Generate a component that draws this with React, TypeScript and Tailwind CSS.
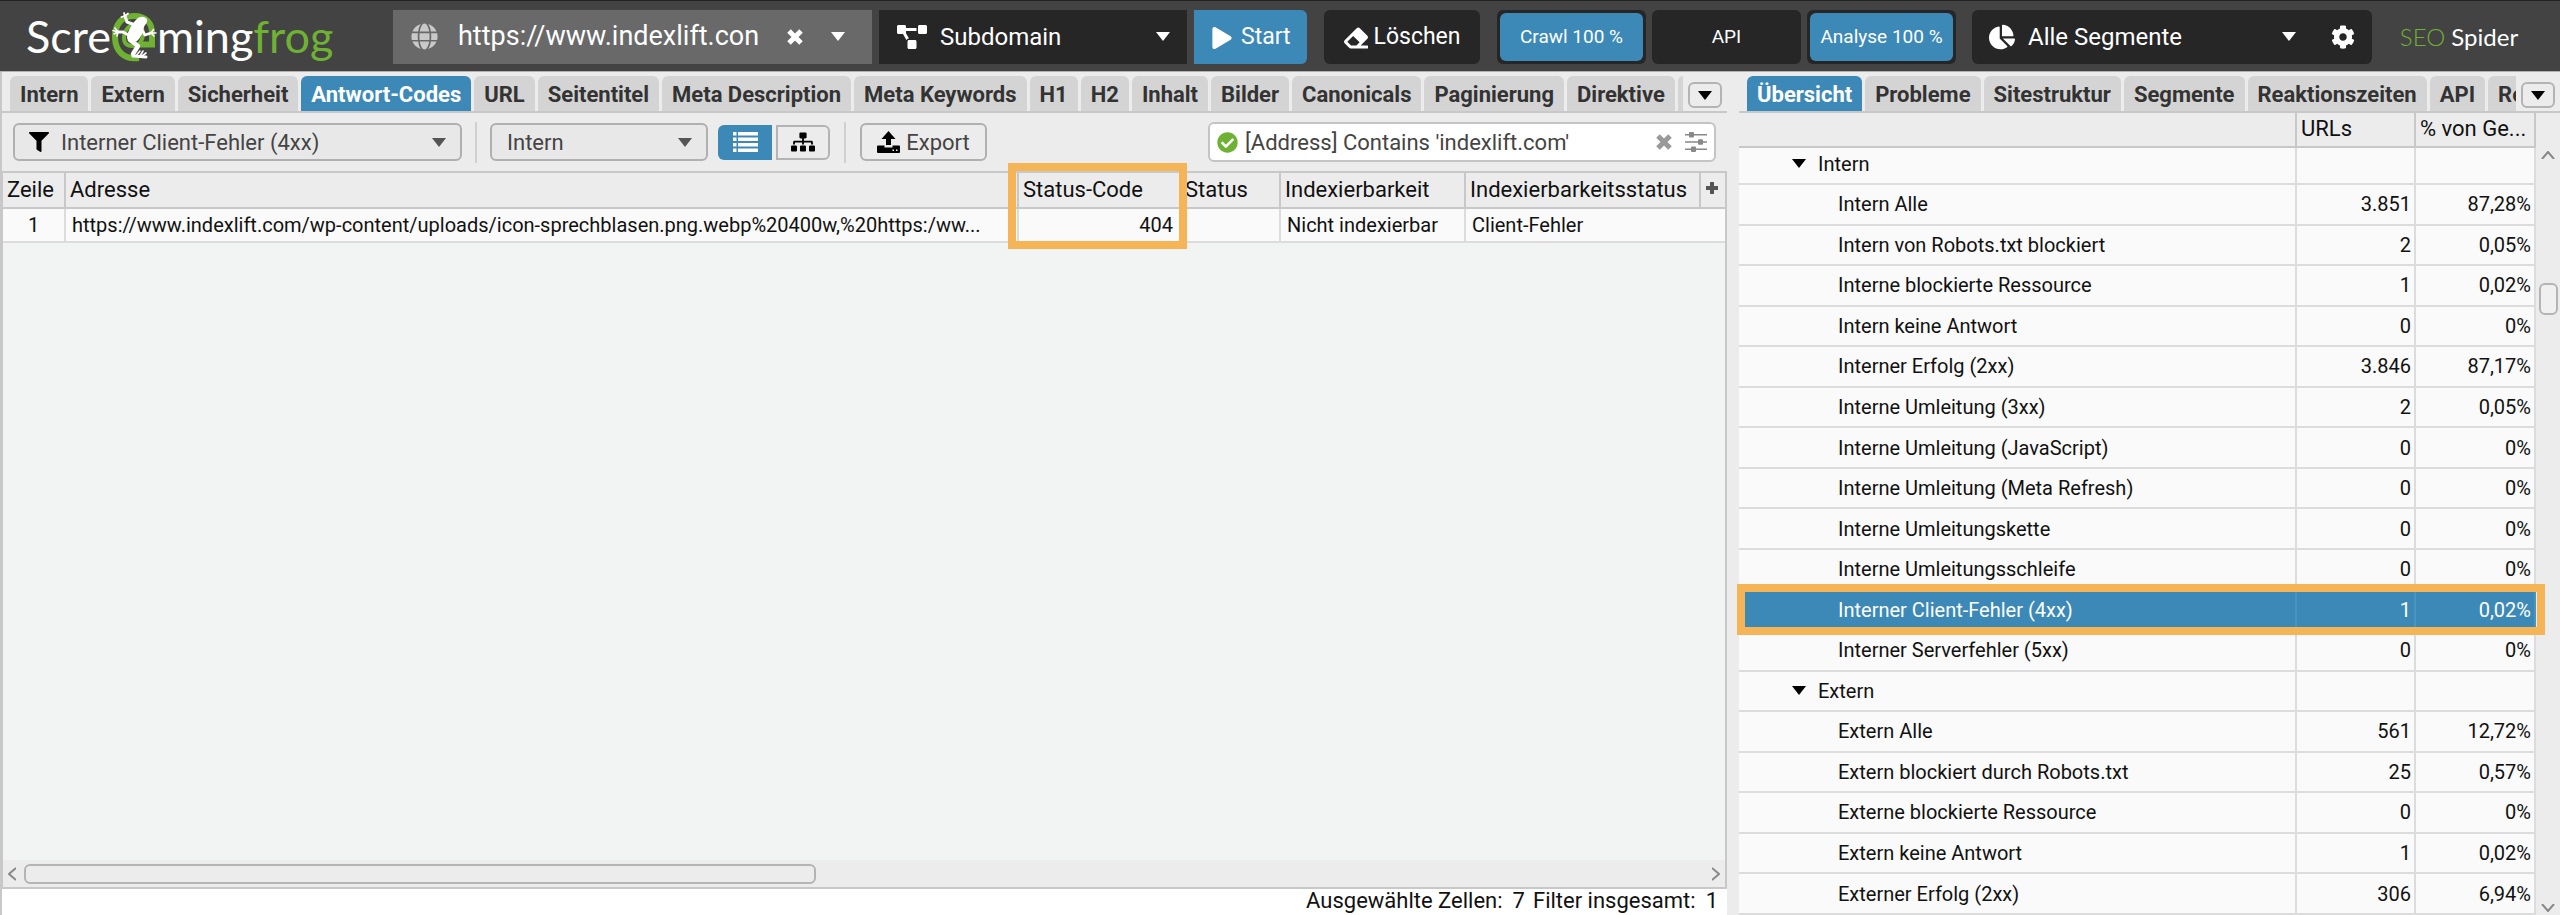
import { useState } from 'react';
import type { ReactNode } from 'react';
import { clsx } from 'clsx';
import {
  FaChartPie,
  FaCheckCircle,
  FaCog,
  FaEraser,
  FaFilter,
  FaGlobe,
  FaPlay,
  FaProjectDiagram,
  FaSitemap,
} from 'react-icons/fa';

const MAIN_TABS = [
  'Intern', 'Extern', 'Sicherheit', 'Antwort-Codes', 'URL', 'Seitentitel', 'Meta Description',
  'Meta Keywords', 'H1', 'H2', 'Inhalt', 'Bilder', 'Canonicals', 'Paginierung', 'Direktive',
];

const SIDE_TABS = ['Übersicht', 'Probleme', 'Sitestruktur', 'Segmente', 'Reaktionszeiten', 'API', 'Re'];

interface OverviewRow {
  label: string;
  urls?: string;
  share?: string;
  group?: boolean;
}

const OVERVIEW: OverviewRow[] = [
  { label: 'Intern', group: true },
  { label: 'Intern Alle', urls: '3.851', share: '87,28%' },
  { label: 'Intern von Robots.txt blockiert', urls: '2', share: '0,05%' },
  { label: 'Interne blockierte Ressource', urls: '1', share: '0,02%' },
  { label: 'Intern keine Antwort', urls: '0', share: '0%' },
  { label: 'Interner Erfolg (2xx)', urls: '3.846', share: '87,17%' },
  { label: 'Interne Umleitung (3xx)', urls: '2', share: '0,05%' },
  { label: 'Interne Umleitung (JavaScript)', urls: '0', share: '0%' },
  { label: 'Interne Umleitung (Meta Refresh)', urls: '0', share: '0%' },
  { label: 'Interne Umleitungskette', urls: '0', share: '0%' },
  { label: 'Interne Umleitungsschleife', urls: '0', share: '0%' },
  { label: 'Interner Client-Fehler (4xx)', urls: '1', share: '0,02%' },
  { label: 'Interner Serverfehler (5xx)', urls: '0', share: '0%' },
  { label: 'Extern', group: true },
  { label: 'Extern Alle', urls: '561', share: '12,72%' },
  { label: 'Extern blockiert durch Robots.txt', urls: '25', share: '0,57%' },
  { label: 'Externe blockierte Ressource', urls: '0', share: '0%' },
  { label: 'Extern keine Antwort', urls: '1', share: '0,02%' },
  { label: 'Externer Erfolg (2xx)', urls: '306', share: '6,94%' },
];

function Caret({ className }: { className?: string }) {
  return (
    <svg viewBox="0 0 14 9" className={clsx('h-[9px] w-[14px] shrink-0', className)} fill="currentColor" aria-hidden>
      <path d="M0 0h14L7 9z" />
    </svg>
  );
}

function Cross({ className }: { className?: string }) {
  return (
    <svg viewBox="0 0 16 16" className={clsx('size-4', className)} stroke="currentColor" strokeWidth="5" aria-hidden>
      <path d="M2 2l12 12M14 2L2 14" />
    </svg>
  );
}

function ListIcon() {
  return (
    <svg viewBox="0 0 25 20" className="h-5 w-[25px]" fill="currentColor" aria-hidden>
      <path d="M0 0h3.500v3.500H0zM5 0h20v3.500H5zM0 5.500h3.500V9H0zM5 5.500h20V9H5zM0 11h3.500v3.500H0zM5 11h20v3.500H5zM0 16.500h3.500V20H0zM5 16.500h20V20H5z" />
    </svg>
  );
}

function UploadIcon() {
  return (
    <svg viewBox="0 0 23 22" className="h-[22px] w-[23px]" fill="currentColor" aria-hidden>
      <path d="M11.500 0l7 8H14v6H9V8H4.500z" />
      <path
        fillRule="evenodd"
        d="M1 14.500h6.500v2h8v-2H22a1 1 0 0 1 1 1V21a1 1 0 0 1-1 1H1a1 1 0 0 1-1-1v-5.500a1 1 0 0 1 1-1zM15.500 18.500v1.500H17v-1.500zM19 18.500v1.500h1.500v-1.500z"
      />
    </svg>
  );
}

function SlidersIcon() {
  return (
    <svg viewBox="0 0 22 20" className="h-5 w-[22px]" fill="currentColor" aria-hidden>
      <path d="M0 2h22v1.500H0zM0 9.200h22v1.500H0zM0 16.500h22V18H0z" />
      <rect x="4" y="0" width="5" height="5.500" rx="1" />
      <rect x="13" y="7.200" width="5" height="5.500" rx="1" />
      <rect x="6" y="14.500" width="5" height="5.500" rx="1" />
    </svg>
  );
}

function FrogMark() {
  return (
    <svg viewBox="9 7 46 50" className="h-[50px] w-[46px]" fill="none" strokeLinecap="round" strokeLinejoin="round" aria-hidden>
      <path d="M37 53C22 55 13 46 13 32 13 19 20 11 32 11c12 0 18 7 18 17v11.500H37" stroke="#6fb133" strokeWidth="6" strokeLinecap="butt" strokeLinejoin="miter" />
      <path d="M22 33c0-8 5-13 11-13 5 0 8 4 8 9s-3 12-10 12-9-4-9-8z" stroke="#6fb133" strokeWidth="4" />
      <path d="M36 13c3-2 8-1.500 9 1.500 1 3-2 5-3 7.500-1 6-3.500 11-7 14-4 3-10 1-10-4 1-7 6-15 11-19z" fill="#fff" />
      <g stroke="#fff">
        <path d="M33 20l-8-3-2-6" strokeWidth="3" />
        <path d="M23 11l-3.500 1M23 11l-1-3M23 11l3-2.500" strokeWidth="1.800" />
        <path d="M28 31l-7-4h-6" strokeWidth="2.800" />
        <path d="M16 27l-5-1.500M16 27l-4 2M16 27l-1 4M16 27l-3-4" strokeWidth="1.600" />
        <path d="M40 25l3 5 6-2" strokeWidth="2.800" />
        <path d="M49 28l2.500-3.500M49 28h5M49 28l3 3" strokeWidth="1.600" />
        <path d="M28 35l8 6-5 8" strokeWidth="4.500" />
        <path d="M31 51l13 1" strokeWidth="3" />
        <path d="M34 51l4-5M38 51l3-5M40 51l4-3" strokeWidth="1.600" />
      </g>
    </svg>
  );
}

interface TabBarProps {
  tabs: string[];
  initial: string;
  label: string;
  tail?: ReactNode;
}

function TabBar({ tabs, initial, label, tail }: TabBarProps) {
  const [active, setActive] = useState(initial);

  return (
    <div className="flex h-[41px] items-end border-b-2 border-[#c8c8c8]">
      <div role="tablist" aria-label={label} className="flex h-[35px] min-w-0 flex-1 gap-[3px] overflow-hidden pl-2">
        {tabs.map(tab => (
          <button
            key={tab}
            role="tab"
            aria-selected={tab === active}
            onClick={() => setActive(tab)}
            className={clsx(
              'shrink-0 rounded-t-md px-[10px] pt-0.5 text-[22px] font-bold whitespace-nowrap',
              tab === active ? 'bg-[#3c89b8] text-white' : 'bg-[#d4d4d4] text-[#333]',
            )}
          >
            {tab}
          </button>
        ))}
        {tail}
      </div>
      <button
        aria-label="Weitere Tabs"
        className="mx-[5px] mb-[3px] flex h-[26px] w-[34px] items-center justify-center rounded-md border-2 border-[#b4b4b4] bg-[#ececec] text-black"
      >
        <Caret />
      </button>
    </div>
  );
}

function Toolbar() {
  return (
    <header className="flex h-[72px] items-center border-t border-b border-t-[#222] border-b-[#b5b1b1] bg-[#434343] pt-px text-2xl text-white">
      <div className="ml-[26px] flex w-[367px] items-center font-[Lato,sans-serif] text-[45px] leading-none">
        Scre
        <FrogMark />
        ming<span className="text-[#6fb133]">frog</span>
      </div>

      <div className="flex h-[54px] w-[479px] items-center bg-[#696969] pr-[27px] pl-[18px]">
        <FaGlobe className="mr-5 size-[27px] shrink-0 text-[#c9c9c9]" />
        <input
          aria-label="URL"
          defaultValue="https://www.indexlift.con"
          className="min-w-0 flex-1 bg-transparent text-[27px] outline-none"
        />
        <button aria-label="URL leeren" className="mr-7">
          <Cross />
        </button>
        <button aria-label="Letzte URLs">
          <Caret />
        </button>
      </div>

      <div className="relative ml-[7px] flex h-[54px] w-[308px] items-center bg-[#262626] pl-[18px]">
        <FaProjectDiagram className="size-[30px]" />
        <select aria-label="Crawl-Modus" className="absolute inset-0 appearance-none bg-transparent pl-[61px] outline-none">
          <option>Subdomain</option>
        </select>
        <Caret className="pointer-events-none absolute right-[17px]" />
      </div>

      <button className="ml-[7px] flex h-[54px] w-[113px] items-center gap-2 rounded-r-md bg-[#3c89b8] pt-0.5 pl-[17px] text-[23px]">
        <FaPlay className="size-[22px]" />
        Start
      </button>
      <button className="ml-[17px] flex h-[54px] w-[156px] items-center justify-center gap-[6px] rounded-md bg-[#262626] pt-0.5 text-[23px]">
        <FaEraser className="size-6" />
        Löschen
      </button>

      <div className="ml-[17px] flex h-[54px] gap-[6px] text-[19px]">
        <div className="w-[149px] rounded-md bg-[#262626] p-[3px]">
          <div className="flex h-full items-center justify-center rounded-md bg-[#3c89b8]">Crawl 100 %</div>
        </div>
        <div className="flex w-[149px] items-center justify-center rounded-md bg-[#262626]">API</div>
        <div className="w-[149px] rounded-md bg-[#262626] p-[3px]">
          <div className="flex h-full items-center justify-center rounded-md bg-[#3c89b8]">Analyse 100 %</div>
        </div>
      </div>

      <div className="relative ml-4 flex h-[54px] w-[400px] items-center rounded-md bg-[#262626] pl-[17px]">
        <FaChartPie className="size-[26px]" />
        <select aria-label="Segmente" className="absolute inset-0 appearance-none bg-transparent pl-[56px] outline-none">
          <option>Alle Segmente</option>
        </select>
        <Caret className="pointer-events-none absolute right-[76px]" />
        <button aria-label="Segmente konfigurieren" className="absolute right-[17px]">
          <FaCog className="size-6" />
        </button>
      </div>

      <div className="flex-1 pr-[14px] text-center font-[Lato,sans-serif]">
        <span className="font-light text-[#6fb133]">SEO</span> Spider
      </div>
    </header>
  );
}

function FilterBar() {
  return (
    <div className="flex h-[58px] items-center px-[11px] text-[22px] text-[#444]">
      <div className="relative flex h-[38px] w-[449px] items-center">
        <select
          aria-label="Filter"
          className="absolute inset-0 appearance-none rounded-md border-2 border-[#b0b0b0] bg-[#e8e8e8] pl-[46px] outline-none"
        >
          <option>Interner Client-Fehler (4xx)</option>
        </select>
        <FaFilter className="pointer-events-none absolute left-4 size-5 text-black" />
        <Caret className="pointer-events-none absolute right-4 text-[#555]" />
      </div>
      <div className="mx-[13px] h-[41px] w-0.5 bg-[#d0d0d0]" />
      <div className="relative flex h-[38px] w-[218px] items-center">
        <select
          aria-label="Bereich"
          className="absolute inset-0 appearance-none rounded-md border-2 border-[#b0b0b0] bg-[#e8e8e8] pl-[15px] outline-none"
        >
          <option>Intern</option>
        </select>
        <Caret className="pointer-events-none absolute right-4 text-[#555]" />
      </div>
      <button
        aria-label="Listenansicht"
        className="ml-[10px] flex h-[35px] w-[54px] items-center justify-center rounded-l-md bg-[#3c89b8] text-white"
      >
        <ListIcon />
      </button>
      <button
        aria-label="Baumansicht"
        className="ml-1 flex h-[35px] w-[54px] items-center justify-center rounded-r-md border-2 border-[#b4b4b4] bg-[#ececec] text-black"
      >
        <FaSitemap className="size-6" />
      </button>
      <div className="mx-[14px] h-[41px] w-0.5 bg-[#d0d0d0]" />
      <button className="flex h-[38px] w-[127px] items-center justify-center gap-[6px] rounded-md border-2 border-[#b0b0b0] bg-[#ececec]">
        <span className="text-black">
          <UploadIcon />
        </span>
        Export
      </button>

      <div className="ml-auto flex h-10 w-[508px] items-center rounded-md border-2 border-[#c4c4c4] bg-white px-[7px]">
        <FaCheckCircle className="mr-[7px] size-[21px] shrink-0 text-[#6fb133]" />
        <input
          aria-label="Suche"
          defaultValue="[Address] Contains 'indexlift.com'"
          className="min-w-0 flex-1 bg-transparent outline-none"
        />
        <button aria-label="Suche leeren" className="mr-[13px] text-[#999]">
          <Cross />
        </button>
        <button aria-label="Suchoptionen" className="text-[#888]">
          <SlidersIcon />
        </button>
      </div>
    </div>
  );
}

function ResultTable() {
  return (
    <table className="w-full table-fixed border-collapse bg-[#fafafa] text-xl text-[#111]">
      <colgroup>
        <col className="w-[62px]" />
        <col />
        <col className="w-[162px]" />
        <col className="w-[100px]" />
        <col className="w-[185px]" />
        <col className="w-[235px]" />
        <col className="w-[25px]" />
      </colgroup>
      <thead>
        <tr className="h-[35px] border-b-2 border-[#c8c8c8] bg-[#ececec] text-left text-[22px] *:border-r-2 *:border-[#c8c8c8] *:pl-1 *:font-normal *:last:border-r-0">
          <th>Zeile</th>
          <th>Adresse</th>
          <th className="relative">
            Status-Code
            {/* highlight frame spans header and value */}
            <span className="pointer-events-none absolute -top-[10px] -left-[11px] z-10 h-[86px] w-[179px] border-8 border-[#f5b556]" />
          </th>
          <th>Status</th>
          <th>Indexierbarkeit</th>
          <th>Indexierbarkeitsstatus</th>
          <th className="pb-1 text-[#555]">
            <button aria-label="Spalte hinzufügen" className="block">
              <svg viewBox="0 0 14 14" className="size-[14px]" stroke="currentColor" strokeWidth="4" aria-hidden>
                <path d="M7 1v12M1 7h12" />
              </svg>
            </button>
          </th>
        </tr>
      </thead>
      <tbody>
        <tr className="h-[34px] border-b-2 border-[#dcdcdc] *:border-r-2 *:border-[#dcdcdc] *:px-[6px] *:last:border-r-0">
          <td className="text-center">1</td>
          <td className="whitespace-nowrap">
            https://www.indexlift.com/wp-content/uploads/icon-sprechblasen.png.webp%20400w,%20https:/ww...
          </td>
          <td className="text-right">404</td>
          <td />
          <td>Nicht indexierbar</td>
          <td colSpan={2}>Client-Fehler</td>
        </tr>
      </tbody>
    </table>
  );
}

function OverviewPanel() {
  const [selected, setSelected] = useState('Interner Client-Fehler (4xx)');

  return (
    <aside className="flex w-[821px] shrink-0 flex-col bg-[#ececec]">
      <TabBar tabs={SIDE_TABS} initial="Übersicht" label="Übersicht" />
      <div className="flex min-h-0 flex-1">
        <table className="h-full flex-1 table-fixed border-collapse text-xl text-[#111]">
          <colgroup>
            <col />
            <col className="w-[119px]" />
            <col className="w-[120px]" />
          </colgroup>
          <thead>
            <tr className="h-[34px] border-b-2 border-[#c8c8c8] text-left text-[22px] *:border-r-2 *:border-[#c8c8c8] *:pl-1 *:font-normal">
              <th aria-label="Filter" />
              <th>URLs</th>
              <th>% von Ge...</th>
            </tr>
          </thead>
          <tbody>
            {OVERVIEW.map(row => {
              const active = row.label === selected;
              return (
                <tr
                  key={row.label}
                  onClick={() => setSelected(row.label)}
                  className={clsx(
                    'border-b-2 border-[#dcdcdc] first:h-[37px] first:*:pb-1 *:border-r-2',
                    active
                      ? 'bg-[#3c89b8] text-white *:border-[#4a94c0]'
                      : 'bg-[#fafafa] *:border-[#dcdcdc]',
                  )}
                >
                  <td className={clsx('relative', row.group ? 'pl-[53px]' : 'pl-[99px]')}>
                    {active && (
                      <span className="pointer-events-none absolute -inset-y-[6px] -left-0.5 z-10 w-[808px] border-8 border-[#f5b556]" />
                    )}
                    {row.group ? (
                      <span className="flex items-center gap-3">
                        <Caret className="text-black" />
                        {row.label}
                      </span>
                    ) : (
                      row.label
                    )}
                  </td>
                  <td className="pr-[3px] text-right">{row.urls}</td>
                  <td className="pr-[3px] text-right">{row.share}</td>
                </tr>
              );
            })}
          </tbody>
        </table>
        <div className="flex w-6 flex-col items-center pt-[38px] pb-[3px] text-[#888]">
          <svg viewBox="0 0 14 8" className="h-2 w-[14px]" fill="none" stroke="currentColor" strokeWidth="2" aria-hidden>
            <path d="M1 8l6-7 6 7" />
          </svg>
          <div className="mt-[124px] h-8 w-[19px] rounded-md border-2 border-[#b4b4b4] bg-[#f0f0f0]" />
          <svg viewBox="0 0 14 8" className="mt-auto h-2 w-[14px]" fill="none" stroke="currentColor" strokeWidth="2" aria-hidden>
            <path d="M1 0l6 7 6-7" />
          </svg>
        </div>
      </div>
    </aside>
  );
}

export default function App() {
  return (
    <div className="flex h-screen flex-col overflow-hidden bg-[#ececec] font-[Roboto,sans-serif]">
      <Toolbar />
      <div className="flex min-h-0 flex-1">
        <main className="flex min-w-0 flex-1 flex-col border-l-2 border-[#c8c8c8]">
          <TabBar
            tabs={MAIN_TABS}
            initial="Antwort-Codes"
            label="Berichte"
            tail={<span className="flex-1 rounded-tl-md bg-[#d4d4d4]" />}
          />
          <FilterBar />
          <div className="flex flex-1 flex-col border-2 border-l border-[#c8c8c8] bg-[#f2f4f3]">
            <ResultTable />
            <div className="mt-auto flex h-[27px] items-center bg-[#ececec] px-[5px] text-[#888]">
              <svg viewBox="0 0 8 14" className="h-[14px] w-2" fill="none" stroke="currentColor" strokeWidth="2" aria-hidden>
                <path d="M8 1L1 7l7 6" />
              </svg>
              <div className="ml-2 h-5 w-[792px] rounded-md border-2 border-[#b4b4b4]" />
              <svg viewBox="0 0 8 14" className="ml-auto h-[14px] w-2" fill="none" stroke="currentColor" strokeWidth="2" aria-hidden>
                <path d="M0 1l7 6-7 6" />
              </svg>
            </div>
          </div>
          <footer className="flex h-[26px] items-start justify-end gap-2 bg-white pr-[9px] text-[22px] leading-6 text-[#111]">
            <span className="flex gap-[10px]">
              <span>Ausgewählte Zellen:</span>
              <span>7</span>
            </span>
            <span className="flex gap-[10px]">
              <span>Filter insgesamt:</span>
              <span>1</span>
            </span>
          </footer>
        </main>
        <div className="w-3 bg-[#ececec]" />
        <OverviewPanel />
      </div>
    </div>
  );
}
